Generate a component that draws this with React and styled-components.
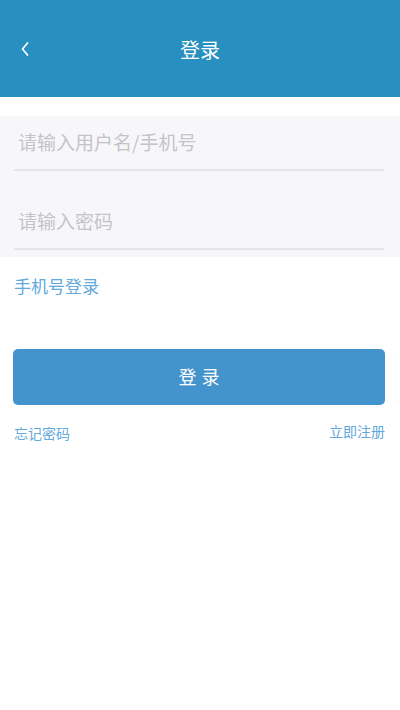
import React from 'react';
import styled, { createGlobalStyle } from 'styled-components';

const GlobalStyle = createGlobalStyle`
  html, body {
    margin: 0;
    padding: 0;
    background: #ffffff;
    font-family: "Noto Sans CJK SC", "Noto Sans", sans-serif;
  }
  * { box-sizing: border-box; }
`;

const Page = styled.div`
  width: 400px;
  min-height: 710px;
  background: #fff;
`;

const Header = styled.div`
  height: 97px;
  background: #2890c0;
  display: flex;
  align-items: center;
  justify-content: center;
  position: relative;
  color: #fff;
`;

const Back = styled.button`
  position: absolute;
  left: 13px;
  top: 37px;
  width: 24px;
  height: 24px;
  padding: 0;
  border: none;
  background: transparent;
  display: flex;
  align-items: center;
  justify-content: center;
`;

const Title = styled.h1`
  margin: 0;
  font-size: 20px;
  font-weight: 400;
  line-height: 1;
  margin-top: 3px;
`;

const Form = styled.div`
  margin-top: 19px;
  background: #f7f7f9;
  padding: 0 16px 7px 14px;
`;

const Field = styled.div`
  display: flex;
  align-items: center;
  border-bottom: 2px solid #e6e6ea;
  padding-left: 4px;
  padding-top: ${p => (p.$first ? '0' : '25px')};
  padding-bottom: ${p => (p.$first ? '2px' : '3px')};
  height: ${p => (p.$first ? '55px' : '79px')};
`;

const Input = styled.input`
  flex: 1;
  border: none;
  outline: none;
  background: transparent;
  font-family: inherit;
  font-size: 19px;
  color: #333;
  padding: 0;
  &::placeholder { color: #c4c4c8; }
`;

const Body = styled.div`
  padding: 0 15px 0 13px;
`;

const LinkText = styled.a`
  color: ${p => p.$color || '#62a9dc'};
  font-size: ${p => p.$size || 17}px;
  text-decoration: none;
  line-height: 1;
`;

const PhoneRow = styled.div`
  padding: 17px 0 0 1px;
  height: 92px;
`;

const Submit = styled.button`
  width: 100%;
  height: 56px;
  border: none;
  border-radius: 5px;
  background: #4394cc;
  color: #fff;
  font-family: inherit;
  font-size: 18px;
  letter-spacing: 5px;
  padding: 0 0 3px 5px;
  display: flex;
  align-items: center;
  justify-content: center;
`;

const Footer = styled.div`
  display: flex;
  justify-content: space-between;
  align-items: flex-start;
  padding: 19px 0 0 1px;
`;

const ForgotLink = styled(LinkText)`
  margin-top: 2px;
`;

export default function App() {
  return (
    <Page>
      <GlobalStyle />
      <Header>
        <Back aria-label="back">
          <svg width="12" height="16" viewBox="0 0 12 16">
            <path d="M8.5 2 L3.5 8 L8.5 14" fill="none" stroke="#fff" strokeWidth="1.7" strokeLinecap="round" strokeLinejoin="round" />
          </svg>
        </Back>
        <Title>登录</Title>
      </Header>
      <Form>
        <Field $first>
          <Input placeholder="请输入用户名/手机号" />
        </Field>
        <Field>
          <Input type="password" placeholder="请输入密码" />
        </Field>
      </Form>
      <Body>
        <PhoneRow>
          <LinkText href="#">手机号登录</LinkText>
        </PhoneRow>
        <Submit>登录</Submit>
        <Footer>
          <ForgotLink href="#" $size={14}>忘记密码</ForgotLink>
          <LinkText href="#" $size={14}>立即注册</LinkText>
        </Footer>
      </Body>
    </Page>
  );
}
